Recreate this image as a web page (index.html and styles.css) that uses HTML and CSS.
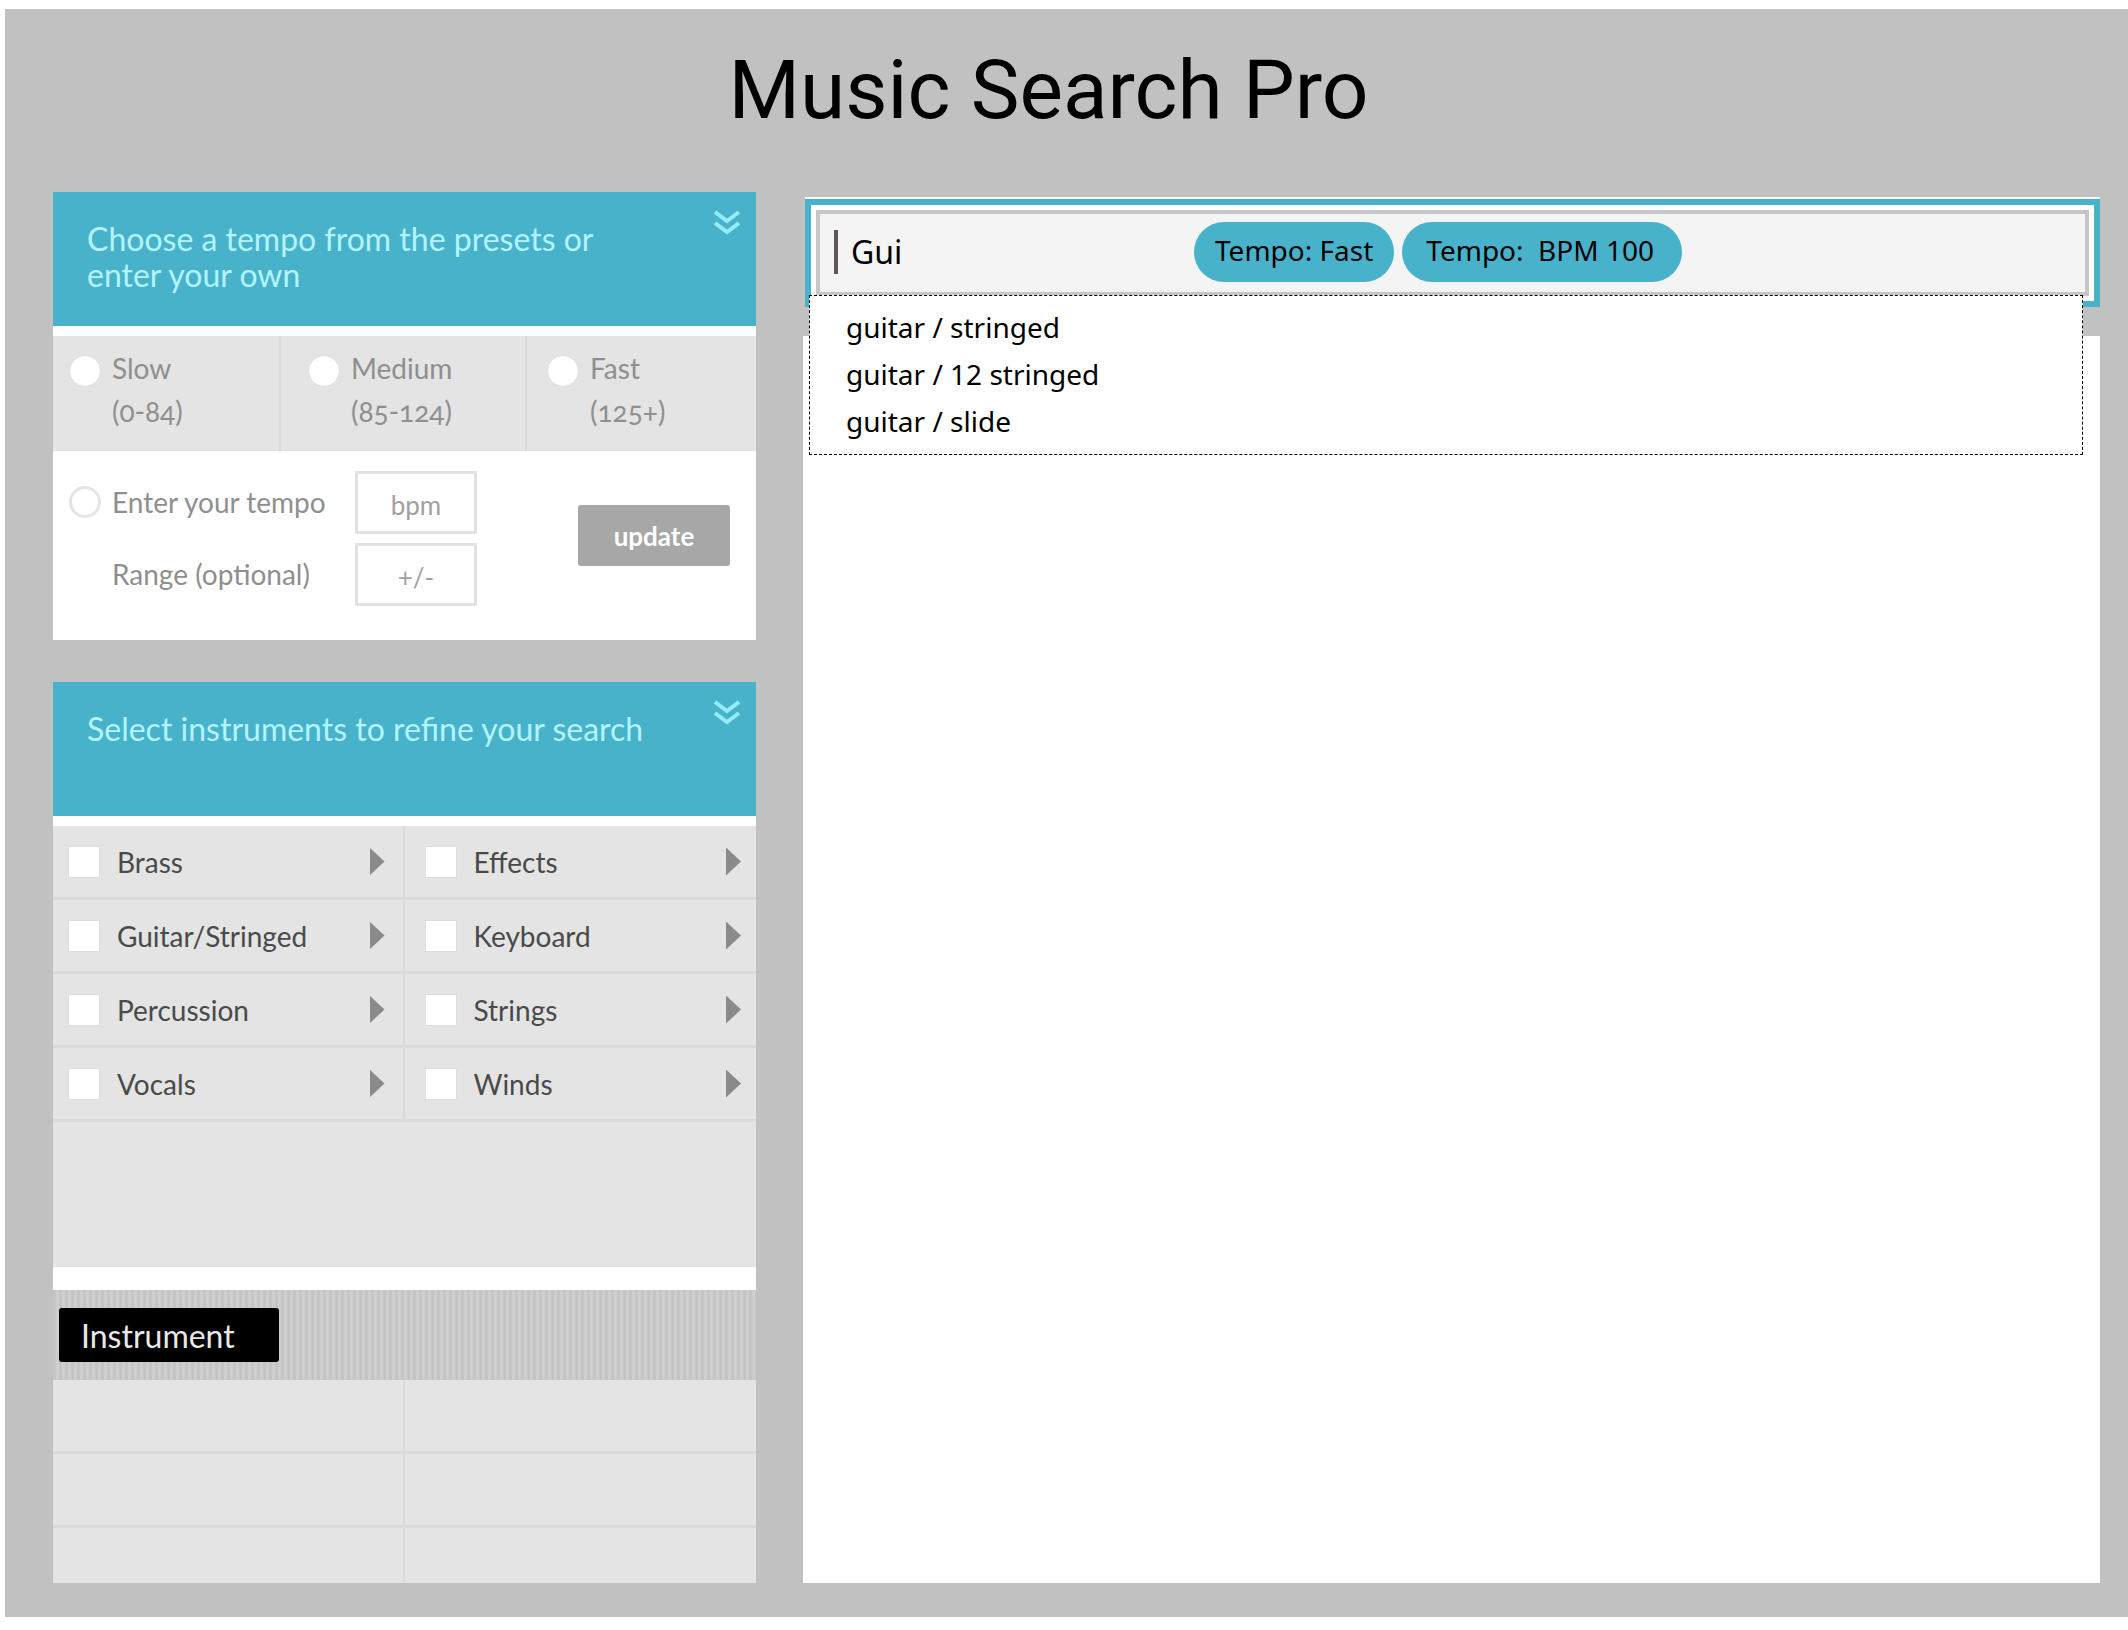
FILE: index.html
```html
<!DOCTYPE html>
<html lang="en">
<head>
<meta charset="utf-8">
<meta name="viewport" content="width=device-width, initial-scale=1">
<title>Music Search Pro</title>
<link rel="stylesheet" href="styles.css">
</head>
<body>
<div class="page">
  <h1 class="title">Music Search Pro</h1>
  <div class="columns">
    <aside class="filters">
      <section class="panel">
        <header class="panel-head">
          <h2>Choose a tempo from the presets or enter your own</h2>
          <button class="collapse" type="button" aria-label="Collapse tempo">
            <svg width="28" height="28" viewBox="0 0 28 28"><path d="M2 3l12 9 12-9M2 14l12 9 12-9"/></svg>
          </button>
        </header>
        <div class="presets">
          <label class="preset"><input type="radio" name="tempo"><span>Slow<br>(0-84)</span></label>
          <label class="preset"><input type="radio" name="tempo"><span>Medium<br>(85-124)</span></label>
          <label class="preset"><input type="radio" name="tempo"><span>Fast<br>(125+)</span></label>
        </div>
        <form class="custom">
          <div class="fields">
            <label class="custom-choice"><input type="radio" name="tempo"><span>Enter your tempo</span></label>
            <input class="small-field" type="text" placeholder="bpm" aria-label="Tempo in bpm">
            <label class="range-label" for="range">Range (optional)</label>
            <input class="small-field" id="range" type="text" placeholder="+/-">
          </div>
          <button class="update" type="button">update</button>
        </form>
      </section>

      <section class="panel">
        <header class="panel-head">
          <h2>Select instruments to refine your search</h2>
          <button class="collapse" type="button" aria-label="Collapse instruments">
            <svg width="28" height="28" viewBox="0 0 28 28"><path d="M2 3l12 9 12-9M2 14l12 9 12-9"/></svg>
          </button>
        </header>
        <div class="instruments">
          <div class="instrument"><label><input type="checkbox">Brass</label><button class="arrow" type="button" aria-label="Open Brass"></button></div>
          <div class="instrument"><label><input type="checkbox">Effects</label><button class="arrow" type="button" aria-label="Open Effects"></button></div>
          <div class="instrument"><label><input type="checkbox">Guitar/Stringed</label><button class="arrow" type="button" aria-label="Open Guitar/Stringed"></button></div>
          <div class="instrument"><label><input type="checkbox">Keyboard</label><button class="arrow" type="button" aria-label="Open Keyboard"></button></div>
          <div class="instrument"><label><input type="checkbox">Percussion</label><button class="arrow" type="button" aria-label="Open Percussion"></button></div>
          <div class="instrument"><label><input type="checkbox">Strings</label><button class="arrow" type="button" aria-label="Open Strings"></button></div>
          <div class="instrument"><label><input type="checkbox">Vocals</label><button class="arrow" type="button" aria-label="Open Vocals"></button></div>
          <div class="instrument"><label><input type="checkbox">Winds</label><button class="arrow" type="button" aria-label="Open Winds"></button></div>
        </div>
        <div class="spacer"></div>
        <div class="tabs"><button class="tab" type="button">Instrument</button></div>
        <div class="slots">
          <div class="slot"></div><div class="slot"></div>
          <div class="slot"></div><div class="slot"></div>
          <div class="slot"></div><div class="slot"></div>
        </div>
      </section>
    </aside>

    <main class="results">
      <div class="search">
        <div class="search-field">
          <span class="caret"></span>
          <input class="query" type="text" value="Gui" aria-label="Search">
          <span class="chip">Tempo: Fast</span>
          <span class="chip chip-wide">Tempo:&nbsp; BPM 100</span>
        </div>
        <ul class="suggestions">
          <li><a href="#">guitar / stringed</a></li>
          <li><a href="#">guitar / 12 stringed</a></li>
          <li><a href="#">guitar / slide</a></li>
        </ul>
      </div>
      <div class="result-list"></div>
    </main>
  </div>
</div>
</body>
</html>
```
FILE: styles.css
```css
* { box-sizing: border-box; }

body {
  margin: 0;
  padding: 9px 0 12px 5px;
  background: #fff;
  font-family: Lato, "Liberation Sans", sans-serif;
  font-size: 28px;
}

button, input { font: inherit; margin: 0; padding: 0; border: 0; border-radius: 0; }
a { color: inherit; text-decoration: none; }

.page {
  padding: 33px 28px 34px 48px;
  background: #c1c1c1;
}

.title {
  margin: 0 56px 54px 0;
  font: 400 82px/96px Roboto, sans-serif;
  text-align: center;
  color: #000;
}

.columns {
  display: grid;
  grid-template-columns: 703fr 1297fr;
  gap: 47px;
}

.filters { display: flex; flex-direction: column; gap: 42px; }
.panel { background: #fff; }

.panel-head {
  display: flex;
  justify-content: space-between;
  align-items: flex-start;
  min-height: 144px;
  padding: 17px 15px 0 34px;
  background: #49b2cb;
  border-bottom: 10px solid #fff;
  color: #b2f4ff;
}
.panel-head h2 {
  max-width: 560px;
  margin: 12px 0 0;
  font-size: 32px;
  font-weight: 400;
  line-height: 36px;
}
.collapse { height: 28px; background: none; }
.collapse svg { display: block; fill: none; stroke: #96ecf8; stroke-width: 4; }

input[type="radio"], input[type="checkbox"] {
  appearance: none;
  flex: none;
  width: 32px;
  height: 32px;
  background: #fff;
  border: 1px solid #dedede;
}
input[type="radio"] { border-radius: 50%; }

.presets {
  display: grid;
  grid-template-columns: 228fr 246fr 229fr;
  background: #e4e4e4;
  color: #8f8f8f;
}
.preset {
  display: flex;
  gap: 11px;
  min-height: 115px;
  padding: 11px 0 0 20px;
  line-height: 43px;
  border-right: 2px solid #dadada;
  font-variant-numeric: oldstyle-nums;
}
.preset:nth-child(1) { padding-left: 16px; }
.preset:nth-child(2) { padding-left: 27px; }
.preset:last-child { border-right: 0; }
.preset input { margin-top: 8px; }

.custom {
  display: flex;
  justify-content: space-between;
  align-items: flex-start;
  min-height: 189px;
  padding: 20px 26px 0 16px;
  color: #8f8f8f;
}
.fields {
  display: grid;
  grid-template-columns: 286px 122px;
  grid-auto-rows: 63px;
  align-items: center;
  row-gap: 9px;
}
.custom-choice { display: flex; align-items: center; gap: 11px; padding-bottom: 2px; }
.custom-choice input { border: 3px solid #e4e4e4; }
.range-label { padding: 0 0 2px 43px; }
.small-field {
  width: 100%;
  height: 63px;
  padding-top: 4px;
  border: 3px solid #e2e2e2;
  font-size: 26px;
  text-align: center;
}
.small-field::placeholder { color: #a0a0a0; opacity: 1; }
.update {
  width: 152px;
  height: 61px;
  margin-top: 34px;
  border-radius: 3px;
  background: #a7a7a7;
  color: #fff;
  font-size: 26px;
  font-weight: 700;
}

.instruments, .slots {
  display: grid;
  grid-template-columns: 1fr 1fr;
  background: #e4e4e4;
}
.instrument, .slot {
  height: 74px;
  border-bottom: 3px solid #dadada;
}
.instrument:nth-child(odd), .slot:nth-child(odd) { border-right: 2px solid #dadada; }
.slot:nth-last-child(-n+2) { height: 55px; border-bottom: 0; }
.instrument {
  display: flex;
  justify-content: space-between;
  align-items: center;
  padding: 0 18px 0 15px;
  color: #4a4a4a;
}
.instrument:nth-child(even) { padding: 0 15px 0 20px; }
.instrument label { display: flex; align-items: center; gap: 17px; }
.arrow {
  width: 15px;
  height: 28px;
  background: #8a8a8a;
  clip-path: polygon(0 0, 100% 50%, 0 100%);
}
.spacer { height: 145px; background: #e4e4e4; }

.tabs {
  margin-top: 23px;
  padding: 18px 6px;
  background: repeating-linear-gradient(90deg, #c5c5c5 0 3px, #cecece 3px 6px);
}
.tab {
  display: block;
  width: 220px;
  height: 54px;
  padding-left: 22px;
  border-radius: 3px;
  background: #000;
  color: #e8e8e8;
  font-size: 32px;
  text-align: left;
}

.results {
  display: flex;
  flex-direction: column;
  gap: 29px;
  padding-top: 7px;
  font-family: "Noto Sans", sans-serif;
  color: #000;
}
.search {
  position: relative;
  margin-left: 2px;
  padding: 5px;
  background: #fff;
  border: 6px solid #49b2cb;
  box-shadow: 0 -2px #fff;
}
.search-field {
  display: flex;
  align-items: center;
  gap: 8px;
  height: 86px;
  padding: 0 16px 2px 14px;
  background: #f4f4f4;
  border: 4px solid #c6c6c6;
}
.caret { width: 4px; height: 44px; background: #5d5558; }
.query {
  width: 340px;
  padding-left: 5px;
  background: none;
  color: #000;
  font-size: 32px;
  line-height: 44px;
}
.chip {
  height: 60px;
  padding: 0 21px;
  border-radius: 30px;
  background: #49b2cb;
  font-size: 28px;
  line-height: 57px;
  white-space: nowrap;
}
.chip-wide { padding: 0 28px 0 24px; }

.suggestions {
  position: absolute;
  top: 90px;
  left: -2px;
  right: 11px;
  height: 160px;
  margin: 0;
  padding: 8px 36px;
  background: #fff;
  border: 1px dashed #000;
  list-style: none;
  font-size: 28px;
  line-height: 47px;
}
.result-list { flex: 1; background: #fff; }
```
